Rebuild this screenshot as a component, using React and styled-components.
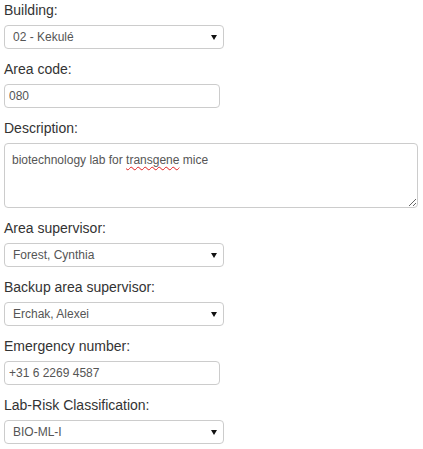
import React from "react";
import styled, { createGlobalStyle } from "styled-components";

const Global = createGlobalStyle`
  html, body { margin: 0; padding: 0; background: #fff; }
  body { font-family: "Liberation Sans", Arial, sans-serif; }
`;

const Form = styled.form`
  display: flex;
  flex-direction: column;
  padding: 0 4px;
  width: 423px;
  box-sizing: border-box;
`;

const Field = styled.div`
  display: flex;
  flex-direction: column;
  align-items: flex-start;
  margin-bottom: 10px;
`;

const Label = styled.label`
  font-size: 14px;
  line-height: 20px;
  color: #333;
  margin-bottom: 5px;
`;

const controlBase = `
  box-sizing: border-box;
  border: 1px solid #ccc;
  border-radius: 4px;
  background: #fff;
  font-family: "Liberation Sans", Arial, sans-serif;
  font-size: 12px;
  color: #555;
  outline: none;
`;

const SelectWrap = styled.div`
  position: relative;
  width: 220px;
`;

const Select = styled.select`
  ${controlBase}
  appearance: none;
  -webkit-appearance: none;
  width: 100%;
  height: 24px;
  padding: 0 20px 0 8px;
  line-height: 22px;
`;

const Arrow = styled.svg`
  position: absolute;
  right: 7px;
  top: 50%;
  margin-top: -2px;
  width: 6px;
  height: 5px;
  pointer-events: none;
`;

const Input = styled.input`
  ${controlBase}
  width: 216px;
  height: 24px;
  padding: 0 4px;
`;

const TextBox = styled.div`
  ${controlBase}
  width: 414px;
  height: 65px;
  padding: 7px 7px 5px;
  line-height: 18px;
  overflow: auto;
  resize: both;
`;

const Misspelled = styled.span`
  text-decoration: underline wavy #e02020;
  text-decoration-thickness: 1px;
  text-underline-offset: 2px;
`;

function SelectField({ label, value }) {
  return (
    <Field>
      <Label>{label}</Label>
      <SelectWrap>
        <Select defaultValue={value}>
          <option>{value}</option>
        </Select>
        <Arrow viewBox="0 0 6 5">
          <path d="M0 0 H6 L3 5 Z" fill="#111" />
        </Arrow>
      </SelectWrap>
    </Field>
  );
}

function InputField({ label, value }) {
  return (
    <Field>
      <Label>{label}</Label>
      <Input defaultValue={value} />
    </Field>
  );
}

export default function App() {
  return (
    <>
      <Global />
      <Form>
        <SelectField label="Building:" value="02 - Kekulé" />
        <InputField label="Area code:" value="080" />
        <Field>
          <Label>Description:</Label>
          <TextBox role="textbox" aria-multiline="true">
            biotechnology lab for <Misspelled>transgene</Misspelled> mice
          </TextBox>
        </Field>
        <SelectField label="Area supervisor:" value="Forest, Cynthia" />
        <SelectField label="Backup area supervisor:" value="Erchak, Alexei" />
        <InputField label="Emergency number:" value="+31 6 2269 4587" />
        <SelectField label="Lab-Risk Classification:" value="BIO-ML-I" />
      </Form>
    </>
  );
}
